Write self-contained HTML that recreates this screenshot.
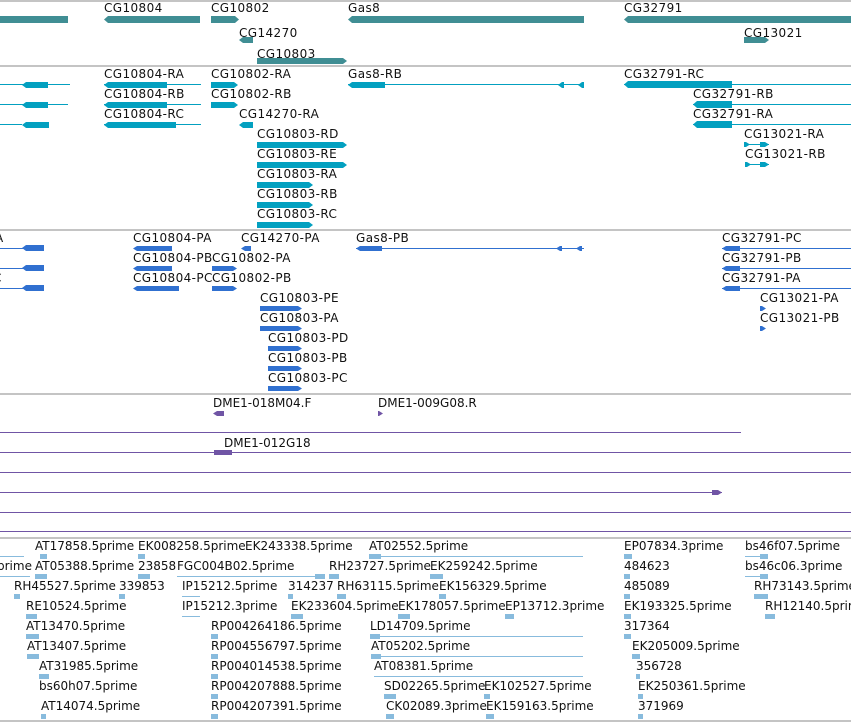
<!DOCTYPE html>
<html><head><meta charset="utf-8"><style>
body{margin:0;width:851px;height:722px;overflow:hidden;background:#fff;position:relative}
div{position:absolute}
.t{font:12px/14px "DejaVu Sans","Liberation Sans",sans-serif;letter-spacing:.4px;color:#111;white-space:nowrap}
.e{font:12px/14px "DejaVu Sans","Liberation Sans",sans-serif;color:#111;white-space:nowrap}
.g{height:2px;left:0;width:851px;background:#c4c4c4}
.a{background:#408e94}
.c{background:#03a0c0}
.d{background:#3070d0}
.p{background:#7055a5}
.q{background:#88bbdd}
.l{clip-path:polygon(4px 0,100% 0,100% 100%,4px 100%,0 50%)}
.r{clip-path:polygon(0 0,calc(100% - 4px) 0,100% 50%,calc(100% - 4px) 100%,0 100%)}
</style></head><body>
<div class="g" style="top:0"></div>
<div class="g" style="top:65px"></div>
<div class="g" style="top:229px"></div>
<div class="g" style="top:393px"></div>
<div class="g" style="top:537px"></div>
<div class="g" style="top:720px"></div>

<!-- track1 -->
<div class="a" style="left:0;top:16px;width:68px;height:7px"></div>
<div class="t" style="left:104px;top:1px">CG10804</div>
<div class="a l" style="left:104px;top:16px;width:96px;height:7px"></div>
<div class="t" style="left:211px;top:1px">CG10802</div>
<div class="a r" style="left:211px;top:16px;width:28px;height:7px"></div>
<div class="t" style="left:239px;top:26px">CG14270</div>
<div class="a l" style="left:239px;top:37px;width:14px;height:6px"></div>
<div class="t" style="left:257px;top:47px">CG10803</div>
<div class="a r" style="left:257px;top:58px;width:90px;height:6px"></div>
<div class="t" style="left:348px;top:1px">Gas8</div>
<div class="a l" style="left:348px;top:16px;width:236px;height:7px"></div>
<div class="t" style="left:624px;top:1px">CG32791</div>
<div class="a l" style="left:624px;top:16px;width:227px;height:7px"></div>
<div class="t" style="left:744px;top:26px">CG13021</div>
<div class="a r" style="left:744px;top:37px;width:25px;height:6px"></div>

<!-- track2 -->
<div class="c" style="left:0;top:84px;width:70px;height:1px"></div><div class="c l" style="left:22px;top:82px;width:26px;height:6px"></div>
<div class="c" style="left:0;top:104px;width:68px;height:1px"></div><div class="c l" style="left:22px;top:102px;width:26px;height:6px"></div>
<div class="c" style="left:0;top:124px;width:22px;height:1px"></div><div class="c l" style="left:22px;top:122px;width:27px;height:6px"></div>
<div class="t" style="left:104px;top:67px">CG10804-RA</div>
<div class="c" style="left:104px;top:84px;width:97px;height:1px"></div><div class="c l" style="left:104px;top:82px;width:63px;height:6px"></div>
<div class="t" style="left:104px;top:87px">CG10804-RB</div>
<div class="c" style="left:104px;top:104px;width:97px;height:1px"></div><div class="c l" style="left:104px;top:102px;width:63px;height:6px"></div>
<div class="t" style="left:104px;top:107px">CG10804-RC</div>
<div class="c" style="left:104px;top:124px;width:97px;height:1px"></div><div class="c l" style="left:104px;top:122px;width:72px;height:6px"></div>
<div class="t" style="left:211px;top:67px">CG10802-RA</div><div class="c r" style="left:211px;top:82px;width:27px;height:6px"></div>
<div class="t" style="left:211px;top:87px">CG10802-RB</div><div class="c r" style="left:211px;top:102px;width:27px;height:6px"></div>
<div class="t" style="left:239px;top:107px">CG14270-RA</div><div class="c l" style="left:239px;top:122px;width:14px;height:6px"></div>
<div class="t" style="left:257px;top:127px">CG10803-RD</div><div class="c r" style="left:257px;top:142px;width:90px;height:6px"></div>
<div class="t" style="left:257px;top:147px">CG10803-RE</div><div class="c r" style="left:257px;top:162px;width:90px;height:6px"></div>
<div class="t" style="left:257px;top:167px">CG10803-RA</div><div class="c r" style="left:257px;top:182px;width:56px;height:6px"></div>
<div class="t" style="left:257px;top:187px">CG10803-RB</div><div class="c r" style="left:257px;top:202px;width:56px;height:6px"></div>
<div class="t" style="left:257px;top:207px">CG10803-RC</div><div class="c r" style="left:257px;top:222px;width:56px;height:6px"></div>
<div class="t" style="left:348px;top:67px">Gas8-RB</div>
<div class="c" style="left:348px;top:84px;width:236px;height:1px"></div><div class="c l" style="left:348px;top:82px;width:37px;height:6px"></div>
<div class="c l" style="left:558px;top:82px;width:6px;height:6px"></div><div class="c l" style="left:578px;top:82px;width:6px;height:6px"></div>
<div class="t" style="left:624px;top:67px">CG32791-RC</div>
<div class="c" style="left:624px;top:84px;width:227px;height:1px"></div><div class="c l" style="left:624px;top:81px;width:108px;height:7px"></div>
<div class="t" style="left:693px;top:87px">CG32791-RB</div>
<div class="c" style="left:693px;top:104px;width:158px;height:1px"></div><div class="c l" style="left:693px;top:101px;width:39px;height:7px"></div>
<div class="t" style="left:693px;top:107px">CG32791-RA</div>
<div class="c" style="left:693px;top:124px;width:158px;height:1px"></div><div class="c l" style="left:693px;top:121px;width:39px;height:7px"></div>
<div class="t" style="left:744px;top:127px">CG13021-RA</div>
<div class="c" style="left:744px;top:144px;width:25px;height:1px"></div><div class="c r" style="left:744px;top:142px;width:6px;height:5px"></div><div class="c r" style="left:760px;top:142px;width:9px;height:5px"></div>
<div class="t" style="left:745px;top:147px">CG13021-RB</div>
<div class="c" style="left:745px;top:164px;width:24px;height:1px"></div><div class="c r" style="left:745px;top:162px;width:6px;height:5px"></div><div class="c r" style="left:760px;top:162px;width:9px;height:5px"></div>

<!-- track3 -->
<div class="t" style="left:-5px;top:231px">A</div>
<div class="t" style="left:-7px;top:271px">C</div>
<div class="d" style="left:0;top:248px;width:44px;height:1px"></div><div class="d l" style="left:22px;top:245px;width:22px;height:6px"></div>
<div class="d" style="left:0;top:268px;width:44px;height:1px"></div><div class="d l" style="left:22px;top:265px;width:22px;height:6px"></div>
<div class="d" style="left:0;top:288px;width:44px;height:1px"></div><div class="d l" style="left:22px;top:285px;width:22px;height:6px"></div>
<div class="t" style="left:133px;top:231px">CG10804-PA</div><div class="d l" style="left:133px;top:246px;width:39px;height:5px"></div>
<div class="t" style="left:133px;top:251px">CG10804-PB</div><div class="d l" style="left:133px;top:266px;width:39px;height:5px"></div>
<div class="t" style="left:133px;top:271px">CG10804-PC</div><div class="d l" style="left:133px;top:286px;width:46px;height:5px"></div>
<div class="t" style="left:241px;top:231px">CG14270-PA</div><div class="d l" style="left:241px;top:246px;width:10px;height:5px"></div>
<div class="t" style="left:212px;top:251px">CG10802-PA</div><div class="d r" style="left:212px;top:266px;width:25px;height:5px"></div>
<div class="t" style="left:212px;top:271px">CG10802-PB</div><div class="d r" style="left:212px;top:286px;width:25px;height:5px"></div>
<div class="t" style="left:260px;top:291px">CG10803-PE</div><div class="d r" style="left:260px;top:306px;width:42px;height:5px"></div>
<div class="t" style="left:260px;top:311px">CG10803-PA</div><div class="d r" style="left:260px;top:326px;width:42px;height:5px"></div>
<div class="t" style="left:268px;top:331px">CG10803-PD</div><div class="d r" style="left:268px;top:346px;width:34px;height:5px"></div>
<div class="t" style="left:268px;top:351px">CG10803-PB</div><div class="d r" style="left:268px;top:366px;width:34px;height:5px"></div>
<div class="t" style="left:268px;top:371px">CG10803-PC</div><div class="d r" style="left:268px;top:386px;width:34px;height:5px"></div>
<div class="t" style="left:356px;top:231px">Gas8-PB</div>
<div class="d" style="left:356px;top:248px;width:228px;height:1px"></div><div class="d l" style="left:356px;top:246px;width:26px;height:5px"></div>
<div class="d l" style="left:556px;top:246px;width:6px;height:5px"></div><div class="d l" style="left:576px;top:246px;width:6px;height:5px"></div>
<div class="t" style="left:722px;top:231px">CG32791-PC</div>
<div class="d" style="left:722px;top:248px;width:129px;height:1px"></div><div class="d l" style="left:722px;top:246px;width:18px;height:5px"></div>
<div class="t" style="left:722px;top:251px">CG32791-PB</div>
<div class="d" style="left:722px;top:268px;width:129px;height:1px"></div><div class="d l" style="left:722px;top:266px;width:18px;height:5px"></div>
<div class="t" style="left:722px;top:271px">CG32791-PA</div>
<div class="d" style="left:722px;top:288px;width:129px;height:1px"></div><div class="d l" style="left:722px;top:286px;width:18px;height:5px"></div>
<div class="t" style="left:760px;top:291px">CG13021-PA</div><div class="d r" style="left:760px;top:306px;width:6px;height:5px"></div>
<div class="t" style="left:760px;top:311px">CG13021-PB</div><div class="d r" style="left:760px;top:326px;width:6px;height:5px"></div>

<!-- track4 -->
<div class="e" style="left:213px;top:396px">DME1-018M04.F</div>
<div class="p l" style="left:213px;top:411px;width:11px;height:5px"></div>
<div class="e" style="left:378px;top:396px">DME1-009G08.R</div>
<div class="p r" style="left:378px;top:411px;width:5px;height:5px"></div>
<div class="p" style="left:0;top:432px;width:741px;height:1px"></div>
<div class="e" style="left:224px;top:436px">DME1-012G18</div>
<div class="p" style="left:0;top:452px;width:851px;height:1px"></div><div class="p" style="left:214px;top:450px;width:18px;height:5px"></div>
<div class="p" style="left:0;top:472px;width:851px;height:1px"></div>
<div class="p" style="left:0;top:492px;width:722px;height:1px"></div><div class="p r" style="left:712px;top:490px;width:10px;height:5px"></div>
<div class="p" style="left:0;top:512px;width:851px;height:1px"></div>
<div class="p" style="left:0;top:531px;width:851px;height:1px"></div>

<!-- track5 ESTs -->
<div class="q" style="left:0;top:556px;width:24px;height:1px"></div>
<div class="e" style="left:35px;top:539px">AT17858.5prime</div><div class="q" style="left:40px;top:554px;width:7px;height:5px"></div>
<div class="e" style="left:138px;top:539px">EK008258.5prime</div><div class="q" style="left:138px;top:554px;width:7px;height:5px"></div>
<div class="e" style="left:245px;top:539px">EK243338.5prime</div>
<div class="e" style="left:369px;top:539px">AT02552.5prime</div><div class="q" style="left:369px;top:556px;width:214px;height:1px"></div><div class="q" style="left:369px;top:554px;width:12px;height:5px"></div>
<div class="e" style="left:624px;top:539px">EP07834.3prime</div><div class="q" style="left:624px;top:554px;width:8px;height:5px"></div>
<div class="e" style="left:745px;top:539px">bs46f07.5prime</div><div class="q" style="left:745px;top:556px;width:23px;height:1px"></div><div class="q" style="left:760px;top:554px;width:8px;height:5px"></div>

<div class="e" style="left:-3px;top:559px">prime</div><div class="q" style="left:0;top:576px;width:30px;height:1px"></div>
<div class="e" style="left:35px;top:559px">AT05388.5prime</div><div class="q" style="left:35px;top:574px;width:12px;height:5px"></div>
<div class="e" style="left:138px;top:559px">23858</div><div class="q" style="left:138px;top:574px;width:12px;height:5px"></div>
<div class="e" style="left:177px;top:559px">FGC004B02.5prime</div><div class="q" style="left:177px;top:576px;width:148px;height:1px"></div><div class="q" style="left:315px;top:574px;width:10px;height:5px"></div>
<div class="e" style="left:329px;top:559px">RH23727.5prime</div><div class="q" style="left:329px;top:574px;width:10px;height:5px"></div>
<div class="e" style="left:430px;top:559px">EK259242.5prime</div><div class="q" style="left:430px;top:574px;width:13px;height:5px"></div>
<div class="e" style="left:624px;top:559px">484623</div><div class="q" style="left:624px;top:574px;width:6px;height:5px"></div>
<div class="e" style="left:745px;top:559px">bs46c06.3prime</div><div class="q" style="left:745px;top:576px;width:23px;height:1px"></div><div class="q" style="left:760px;top:574px;width:8px;height:5px"></div>

<div class="e" style="left:14px;top:579px">RH45527.5prime</div><div class="q" style="left:14px;top:594px;width:6px;height:5px"></div>
<div class="e" style="left:119px;top:579px">339853</div><div class="q" style="left:119px;top:594px;width:6px;height:5px"></div>
<div class="e" style="left:182px;top:579px">IP15212.5prime</div><div class="q" style="left:182px;top:596px;width:18px;height:1px"></div>
<div class="e" style="left:288px;top:579px">314237</div><div class="q" style="left:288px;top:594px;width:5px;height:5px"></div>
<div class="e" style="left:337px;top:579px">RH63115.5prime</div><div class="q" style="left:337px;top:594px;width:9px;height:5px"></div>
<div class="e" style="left:439px;top:579px">EK156329.5prime</div><div class="q" style="left:439px;top:594px;width:7px;height:5px"></div>
<div class="e" style="left:624px;top:579px">485089</div><div class="q" style="left:624px;top:594px;width:6px;height:5px"></div>
<div class="e" style="left:754px;top:579px">RH73143.5prime</div><div class="q" style="left:754px;top:594px;width:14px;height:5px"></div>

<div class="e" style="left:26px;top:599px">RE10524.5prime</div><div class="q" style="left:26px;top:614px;width:11px;height:5px"></div>
<div class="e" style="left:182px;top:599px">IP15212.3prime</div><div class="q" style="left:182px;top:616px;width:18px;height:1px"></div>
<div class="e" style="left:291px;top:599px">EK233604.5prime</div><div class="q" style="left:291px;top:614px;width:12px;height:5px"></div>
<div class="e" style="left:398px;top:599px">EK178057.5prime</div><div class="q" style="left:398px;top:614px;width:12px;height:5px"></div>
<div class="e" style="left:505px;top:599px">EP13712.3prime</div><div class="q" style="left:505px;top:614px;width:9px;height:5px"></div>
<div class="e" style="left:624px;top:599px">EK193325.5prime</div><div class="q" style="left:624px;top:614px;width:7px;height:5px"></div>
<div class="e" style="left:765px;top:599px">RH12140.5prime</div><div class="q" style="left:765px;top:614px;width:10px;height:5px"></div>

<div class="e" style="left:26px;top:619px">AT13470.5prime</div><div class="q" style="left:26px;top:634px;width:13px;height:5px"></div>
<div class="e" style="left:211px;top:619px">RP004264186.5prime</div><div class="q" style="left:211px;top:634px;width:7px;height:5px"></div>
<div class="e" style="left:370px;top:619px">LD14709.5prime</div><div class="q" style="left:370px;top:636px;width:213px;height:1px"></div><div class="q" style="left:370px;top:634px;width:10px;height:5px"></div>
<div class="e" style="left:624px;top:619px">317364</div><div class="q" style="left:624px;top:634px;width:7px;height:5px"></div>

<div class="e" style="left:27px;top:639px">AT13407.5prime</div><div class="q" style="left:27px;top:654px;width:12px;height:5px"></div>
<div class="e" style="left:211px;top:639px">RP004556797.5prime</div><div class="q" style="left:211px;top:654px;width:7px;height:5px"></div>
<div class="e" style="left:371px;top:639px">AT05202.5prime</div><div class="q" style="left:371px;top:656px;width:212px;height:1px"></div><div class="q" style="left:371px;top:654px;width:10px;height:5px"></div>
<div class="e" style="left:632px;top:639px">EK205009.5prime</div><div class="q" style="left:632px;top:654px;width:8px;height:5px"></div>

<div class="e" style="left:39px;top:659px">AT31985.5prime</div><div class="q" style="left:39px;top:674px;width:10px;height:5px"></div>
<div class="e" style="left:211px;top:659px">RP004014538.5prime</div><div class="q" style="left:211px;top:674px;width:7px;height:5px"></div>
<div class="e" style="left:374px;top:659px">AT08381.5prime</div><div class="q" style="left:374px;top:676px;width:209px;height:1px"></div>
<div class="e" style="left:636px;top:659px">356728</div><div class="q" style="left:636px;top:674px;width:4px;height:5px"></div>

<div class="e" style="left:39px;top:679px">bs60h07.5prime</div>
<div class="e" style="left:211px;top:679px">RP004207888.5prime</div><div class="q" style="left:211px;top:694px;width:7px;height:5px"></div>
<div class="e" style="left:384px;top:679px">SD02265.5prime</div><div class="q" style="left:384px;top:694px;width:12px;height:5px"></div>
<div class="e" style="left:484px;top:679px">EK102527.5prime</div><div class="q" style="left:484px;top:694px;width:6px;height:5px"></div>
<div class="e" style="left:638px;top:679px">EK250361.5prime</div><div class="q" style="left:638px;top:694px;width:5px;height:5px"></div>

<div class="e" style="left:41px;top:699px">AT14074.5prime</div><div class="q" style="left:41px;top:714px;width:5px;height:5px"></div>
<div class="e" style="left:211px;top:699px">RP004207391.5prime</div><div class="q" style="left:211px;top:714px;width:7px;height:5px"></div>
<div class="e" style="left:386px;top:699px">CK02089.3prime</div><div class="q" style="left:386px;top:714px;width:8px;height:5px"></div>
<div class="e" style="left:486px;top:699px">EK159163.5prime</div><div class="q" style="left:486px;top:714px;width:8px;height:5px"></div>
<div class="e" style="left:638px;top:699px">371969</div><div class="q" style="left:638px;top:714px;width:5px;height:5px"></div>
</body></html>
